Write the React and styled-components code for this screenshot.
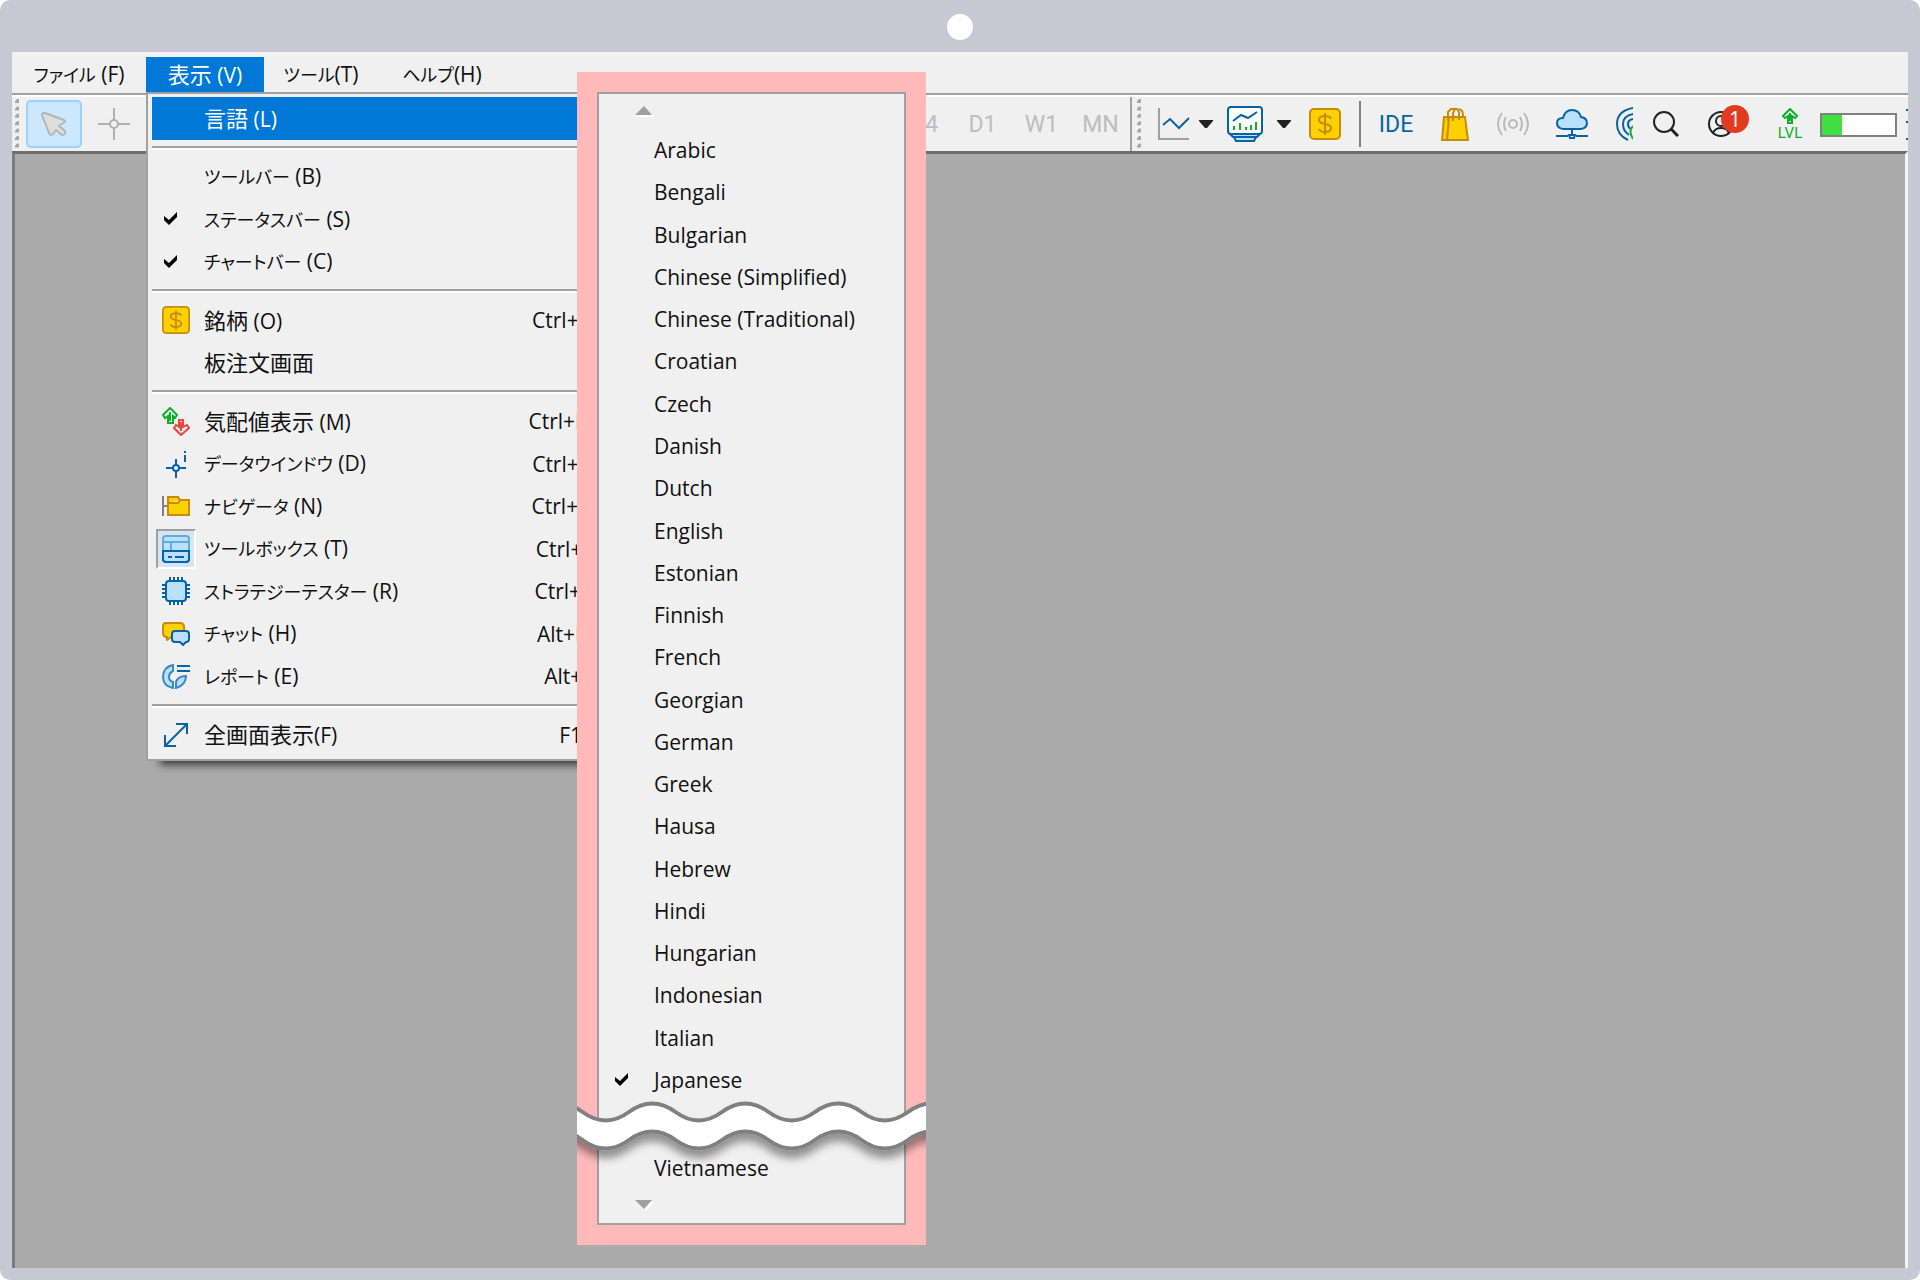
import React, { useState } from "react";
import styled, { createGlobalStyle } from "styled-components";

const GlobalStyle = createGlobalStyle`
  * {
    box-sizing: border-box;
  }

  body {
    margin: 0;
    background: #ffffff;
    color: #111111;
    font-family: "Open Sans", "Noto Sans CJK JP", sans-serif;
    font-size: 21px;
  }

  button {
    margin: 0;
    padding: 0;
    border: 0;
    background: none;
    color: inherit;
    font: inherit;
    cursor: pointer;
  }

  svg {
    display: block;
    flex: none;
  }
`;

const Frame = styled.div`
  display: flex;
  flex-direction: column;
  min-height: 100vh;
  padding: 0 12px 12px;
  border-radius: 10px;
  background: #c8c8d5;
`;

const FrameTop = styled.div`
  display: flex;
  align-items: center;
  justify-content: center;
  height: 52px;
  padding-top: 2px;
`;

const Camera = styled.span`
  width: 26px;
  height: 26px;
  border-radius: 50%;
  background: #ffffff;
`;

const AppWindow = styled.div`
  position: relative;
  flex: 1;
  display: flex;
  flex-direction: column;
  overflow: hidden;
  background: #f0f0f0;
`;

const MenuBar = styled.nav`
  display: flex;
  height: 43px;
  border-top: 5px solid #f3f3f3;
  border-bottom: 2px solid #a0a0a0;
`;

const MenuBarItem = styled.button`
  width: ${(props) => props.$width};
  height: 35px;
  background: ${(props) => (props.$active ? "#0078d7" : "transparent")};
  color: ${(props) => (props.$active ? "#ffffff" : "#111111")};
  line-height: 35px;
  white-space: nowrap;
`;

const Kana = styled.span`
  font-size: 18px;
  font-feature-settings: "palt";
`;

const Kanji = styled.span`
  font-size: 22px;
`;

const ToolBar = styled.div`
  display: flex;
  height: 56px;
  border-top: 2px solid #ffffff;
`;

const ToolGroup = styled.div`
  display: flex;
  align-items: center;
  flex: ${(props) => (props.$grow ? "1" : "none")};
  padding-left: ${(props) => (props.$grow ? "0" : "2px")};
  border-right: ${(props) => (props.$grow ? "2px solid #a0a0a0" : "0")};
`;

const Spacer = styled.span`
  flex: 1;
`;

const GripDots = styled.svg`
  margin-right: 6px;
`;

const ToolButton = styled.button`
  display: flex;
  align-items: center;
  justify-content: center;
  flex: none;
  width: ${(props) => props.$width};
  height: 48px;
  border: 2px solid ${(props) => (props.$pressed ? "#99d1ff" : "transparent")};
  border-radius: 5px;
  background: ${(props) => (props.$pressed ? "#cce8ff" : "transparent")};
  color: ${(props) => props.$color || "#bdbdbd"};
  font-family: Roboto, sans-serif;
  font-size: 23px;
`;

const Divider = styled.span`
  width: 2px;
  height: 46px;
  background: #808080;
`;

const AccountButton = styled(ToolButton)`
  position: relative;
`;

const Badge = styled.span`
  position: absolute;
  top: 3px;
  right: 9px;
  width: 28px;
  height: 28px;
  border-radius: 50%;
  background: #e23b22;
  color: #ffffff;
  font-family: "Open Sans", sans-serif;
  font-size: 21px;
  line-height: 28px;
  text-align: center;
`;

const Level = styled.div`
  display: flex;
  flex-direction: column;
  align-items: center;
  gap: 1px;
  width: 60px;
  color: #0fae2b;
  font-family: Roboto, sans-serif;
  font-size: 15px;
  line-height: 14px;
`;

const LevelMeter = styled.div`
  width: 77px;
  height: 24px;
  margin: 2px 9px 0 0;
  border: 2px solid #808080;
  background: #ffffff;
`;

const LevelFill = styled.div`
  height: 100%;
  background: #40e040;
`;

const Workspace = styled.main`
  flex: 1;
  border-top: 3px solid #6e6e6e;
  border-left: 3px solid #7c7c7c;
  border-right: 3px solid #f4f4f4;
  background: #ababab;
`;

const ViewMenu = styled.div`
  position: absolute;
  top: 40px;
  left: 134px;
  display: flex;
  flex-direction: column;
  width: 471px;
  height: 669px;
  padding: 3px 4px;
  border: 2px solid #a0a0a0;
  background: #f0f0f0;
  box-shadow: 10px 8px 8px -4px rgba(0, 0, 0, 0.65);
`;

const MenuRow = styled.button`
  display: flex;
  align-items: center;
  flex: 1;
  padding: 0 17px 0 4px;
  background: ${(props) => (props.$active ? "#0078d7" : "transparent")};
  color: ${(props) => (props.$active ? "#ffffff" : "#111111")};
  line-height: 30px;
  text-align: left;
  white-space: nowrap;
`;

const IconSlot = styled.span`
  display: flex;
  align-items: center;
  justify-content: ${(props) => (props.$check ? "flex-start" : "center")};
  width: 40px;
  height: 40px;
  margin-right: 8px;
  padding-left: ${(props) => (props.$check ? "6px" : "0")};
  border: 2px solid;
  border-color: ${(props) =>
    props.$pressed ? "#a0a0a0 #ffffff #ffffff #a0a0a0" : "transparent"};
  background: ${(props) => (props.$pressed ? "#d6e5f2" : "transparent")};
`;

const RowLabel = styled.span`
  flex: 1;
`;

const MenuLine = styled.hr`
  flex: none;
  width: 100%;
  height: 4px;
  margin: 6px 0;
  border: 0;
  border-top: 2px solid #a0a0a0;
  border-bottom: 2px solid #ffffff;
`;

const LanguageFrame = styled.div`
  position: absolute;
  top: 20px;
  left: 565px;
  width: 349px;
  padding: 20px;
  background: #ffb9b9;
`;

const LanguageMenu = styled.div`
  display: flex;
  flex-direction: column;
  height: 1133px;
  border: 2px solid #a0a0a0;
  background: #f0f0f0;
`;

const ScrollButton = styled.button`
  flex: none;
  height: 35px;
  padding-left: 36px;
`;

const LanguageList = styled.div`
  display: flex;
  flex: none;
  flex-direction: column;
  height: 972px;
`;

const LanguageRow = styled.button`
  display: flex;
  align-items: center;
  flex: 1;
  line-height: 30px;
  text-align: left;
`;

const CheckSlot = styled.span`
  width: 55px;
  padding-left: 16px;
`;

const TornGap = styled.div`
  flex: none;
  height: 46px;
`;

const Tear = styled.svg`
  position: absolute;
  left: 0;
  bottom: 74px;
`;

const BLUE = "#0763a8";
const SKY = "#b9e1ff";
const GOLD = "#fdd000";
const AMBER = "#c98a0a";
const GREEN = "#0fae2b";

const CheckIcon = () => (
  <svg width="14" height="14" viewBox="0 0 14 14">
    <path d="M0 4 L5 8 L13 0 V5 L5 13 L0 8 Z" fill="#000000" />
  </svg>
);

const Grip = () => (
  <GripDots width="8" height="50" viewBox="0 0 8 50">
    {[0, 1, 2, 3, 4, 5, 6].map((n) => (
      <g key={n}>
        <rect x="3" y={n * 7.4} width="4" height="4" fill="#fafafa" />
        <path d={`M7 ${n * 7.4} v4 h-4 v-2 l2 -2 z`} fill="#a6a6a6" />
      </g>
    ))}
  </GripDots>
);

const CaretIcon = () => (
  <svg width="14" height="8" viewBox="0 0 14 8">
    <path d="M0 0 H14 V1 L8 8 H6 L0 1 Z" fill="#222222" />
  </svg>
);

const PointerIcon = () => (
  <svg width="26" height="26" viewBox="0 0 26 26" fill="#dedede" stroke="#b4b4b4" strokeWidth="2" strokeLinejoin="round">
    <path d="M1 4 Q1 1 4 2 L23 9 Q26 11 22 12 L18 15 L24 20 Q25 24 21 24 L15 19 L12 23 Q9 25 8 22 Z" />
  </svg>
);

const CrossIcon = () => (
  <svg width="32" height="32" viewBox="0 0 32 32" fill="none" stroke="#b0b0b0" strokeWidth="2">
    <path d="M16 0 V12 M16 20 V32 M0 16 H12 M20 16 H32" />
    <circle cx="16" cy="16" r="4" />
  </svg>
);

const LineChartIcon = () => (
  <svg width="32" height="32" viewBox="0 0 32 32" fill="none" strokeWidth="2">
    <path d="M1 0 V31 H31" stroke="#a0a0a0" />
    <path d="M5 17 L12 11 L21 20 L31 10" stroke={BLUE} />
  </svg>
);

const IndicatorIcon = () => (
  <svg width="36" height="36" viewBox="0 0 36 36" fill="none" stroke={BLUE} strokeWidth="2">
    <path d="M2 27 L6 31 H30 L34 27 M7 31 L9 35 H27 L29 31" fill={SKY} />
    <rect x="1" y="1" width="34" height="27" rx="3" fill="#ffffff" />
    <path d="M6 15 L14 9 L21 12 L30 6" />
    <path d="M7 24 V20 M13 24 V17 M19 24 V21 M24 24 V19 M29 24 V16" stroke={GREEN} />
  </svg>
);

const DollarIcon = ({ size = 32 }) => (
  <svg width={size} height={size} viewBox="0 0 32 32" fill="none" stroke={AMBER} strokeWidth="2">
    <rect x="1" y="1" width="30" height="30" rx="4" fill={GOLD} />
    <path d="M22 11 Q21 8 16 8 Q10 8 10 12 Q10 15 16 16 Q22 17 22 20 Q22 24 16 24 Q11 24 10 21 M16 5 V27" />
  </svg>
);

const BagIcon = () => (
  <svg width="28" height="34" viewBox="0 0 28 34" fill="none" stroke={AMBER} strokeWidth="2">
    <path d="M3 10 H24 L27 33 H1 Z" fill={GOLD} />
    <path d="M7 14 V5 L10 2 H16 L18 5 V13 M12 14 V6 L14 2 M18 2 Q22 3 22 8 V10 M8 10 L6 33" />
  </svg>
);

const SignalIcon = () => (
  <svg width="32" height="24" viewBox="0 0 32 24" fill="none" stroke="#b9b9b9" strokeWidth="2">
    <circle cx="16" cy="12" r="4" />
    <path d="M9 5 Q5 12 9 19 M23 5 Q27 12 23 19 M5 1 Q-3 12 5 23 M27 1 Q35 12 27 23" />
  </svg>
);

const CloudIcon = () => (
  <svg width="32" height="30" viewBox="0 0 32 30" fill="none" stroke={BLUE} strokeWidth="2">
    <path d="M7 20 Q1 19 1 14 Q1 9 7 9 Q9 1 16 1 Q23 1 25 8 Q31 9 31 14 Q31 19 25 20 Z" fill={SKY} />
    <path d="M16 20 V26 M0 27 H12 M20 27 H32 M13 26 H19 L18 29 H14 Z" />
  </svg>
);

const VpsIcon = () => (
  <svg width="17" height="34" viewBox="0 0 17 34" fill="none" stroke={BLUE} strokeWidth="2">
    <path d="M17 1 Q1 4 1 17 Q1 28 12 33 M17 7 Q7 9 7 17 Q7 24 13 28 M17 12 Q12 13 12 17 Q12 21 15 22" />
    <path d="M17 19 Q12 24 17 32" stroke={GREEN} />
  </svg>
);

const SearchIcon = () => (
  <svg width="26" height="26" viewBox="0 0 26 26" fill="none" stroke="#222222" strokeWidth="2">
    <circle cx="11" cy="11" r="10" />
    <path d="M18 18 L25 25" strokeWidth="3" />
  </svg>
);

const UserIcon = () => (
  <svg width="26" height="26" viewBox="0 0 26 26" fill="none" stroke="#222222" strokeWidth="2">
    <circle cx="13" cy="13" r="12" />
    <circle cx="13" cy="10" r="5" />
    <path d="M5 22 Q7 17 13 17 Q19 17 21 22" />
  </svg>
);

const UpArrowIcon = () => (
  <svg width="16" height="17" viewBox="0 0 16 17" fill="none" stroke={GREEN} strokeWidth="2">
    <path d="M8 1 L15 8 L13 10 L10 8 V15 H6 V8 L3 10 L1 8 Z M8 5 V13" />
  </svg>
);

const MoreIcon = () => (
  <svg width="2" height="32" viewBox="0 0 2 32" stroke={BLUE} strokeWidth="2">
    <path d="M0 2 H2 M0 14 H2 M0 31 H2" />
  </svg>
);

const QuotesIcon = () => (
  <svg width="28" height="29" viewBox="0 0 28 29" fill="none" strokeWidth="2">
    <path d="M8 1 L15 8 L13 11 L11 9 V16 H6 V9 L3 11 L1 8 Z M8 5 V14" stroke={GREEN} />
    <path d="M19 28 L12 21 L14 18 L17 20 V13 H21 V20 L25 18 L27 21 Z M19 15 V24" stroke="#e5483c" />
  </svg>
);

const DataWindowIcon = () => (
  <svg width="28" height="28" viewBox="0 0 28 28" fill="none" stroke={BLUE} strokeWidth="2">
    <path d="M14 9 V15 M14 21 V28 M4 18 H11 M17 18 H24" />
    <circle cx="14" cy="18" r="3" />
    <path d="M23 1 V3 M23 5 V12" />
  </svg>
);

const NavigatorIcon = () => (
  <svg width="28" height="22" viewBox="0 0 28 22" fill="none" strokeWidth="2">
    <path d="M1 1 V21 M1 11 H6" stroke="#808080" />
    <path d="M6 2 H16 L18 5 H27 V20 H6 Z M6 8 H16 L18 5" fill={GOLD} stroke={AMBER} />
  </svg>
);

const ToolboxIcon = () => (
  <svg width="28" height="28" viewBox="0 0 28 28" fill="none" strokeWidth="2">
    <rect x="1" y="1" width="26" height="26" rx="3" fill={SKY} stroke="#5fade0" />
    <path d="M1 7 H27 M9 7 V16" stroke="#5fade0" />
    <path d="M1 16 H27 V24 Q27 27 24 27 H4 Q1 27 1 24 Z M6 22 H10 M13 22 H22" stroke={BLUE} />
  </svg>
);

const TesterIcon = () => (
  <svg width="28" height="28" viewBox="0 0 28 28" fill="none" stroke={BLUE} strokeWidth="2">
    <path d="M8 0 V28 M12 0 V28 M16 0 V28 M20 0 V28 M0 8 H28 M0 12 H28 M0 16 H28 M0 20 H28" />
    <rect x="4" y="4" width="20" height="20" rx="3" fill={SKY} />
  </svg>
);

const ChatIcon = () => (
  <svg width="28" height="24" viewBox="0 0 28 24" fill="none" strokeWidth="2" strokeLinejoin="round">
    <path d="M4 1 H18 Q22 1 22 5 V12 Q22 15 18 15 H9 L5 18 V15 Q1 15 1 11 V4 Q1 1 4 1 Z" fill={GOLD} stroke={AMBER} />
    <path d="M13 9 H24 Q27 9 27 12 V17 Q27 20 24 20 L21 23 L18 20 H13 Q10 20 10 17 V12 Q10 9 13 9 Z" fill={SKY} stroke={BLUE} />
  </svg>
);

const ReportIcon = () => (
  <svg width="28" height="25" viewBox="0 0 28 25" strokeWidth="2">
    <path d="M11 1 Q1 3 1 13 Q1 22 11 24 V18 Q7 17 7 13 Q7 9 11 7 Z M14 24 V18 Q16 12 24 12 Q24 21 14 24 Z" fill={SKY} stroke="#3a86be" />
    <path d="M15 2 H28 M15 7 H28" stroke={BLUE} />
  </svg>
);

const FullScreenIcon = () => (
  <svg width="26" height="26" viewBox="0 0 26 26" fill="none" stroke={BLUE} strokeWidth="2">
    <path d="M2 24 L24 2 M13 2 H24 V12 M2 13 V24 H13" />
  </svg>
);

const ScrollArrow = ({ down }) => (
  <svg width="19" height="11" viewBox="0 0 19 11">
    <path d={down ? "M3 2 H19 L11 11 Z" : "M0 9 H18 V11 H2 Z"} fill="#ffffff" />
    <path d={down ? "M0 0 H17 L9 9 Z" : "M0 9 L9 0 L17 9 Z"} fill="#a0a0a0" />
  </svg>
);

const waveRight = "q23.25 -17 46.5 0" + " t46.5 0".repeat(9);
const waveLeft = "q-23.25 17 -46.5 0" + " t-46.5 0".repeat(9);

const TearBand = () => (
  <Tear width="349" height="72" viewBox="0 0 349 72">
    <defs>
      <filter id="tear" x="-10%" y="-20%" width="120%" height="180%">
        <feDropShadow dx="0" dy="8" stdDeviation="4" floodOpacity="0.4" />
      </filter>
    </defs>
    <path
      d={`M-41 13 ${waveRight} v28 ${waveLeft} Z`}
      fill="#ffffff"
      stroke="#808080"
      strokeWidth="4"
      filter="url(#tear)"
    />
  </Tear>
);

// kana runs are set smaller than the kanji and latin around them
const Label = ({ text }) =>
  text.split(/([\u30a0-\u30ff]+|[\u4e00-\u9fff]+)/).map((part, index) => {
    if (/^[\u30a0-\u30ff]/.test(part)) return <Kana key={index}>{part}</Kana>;
    if (/^[\u4e00-\u9fff]/.test(part)) return <Kanji key={index}>{part}</Kanji>;
    return part;
  });

const menus = [
  { label: "ファイル (F)", width: "134px" },
  { label: "表示 (V)", width: "118px" },
  { label: "ツール(T)", width: "114px" },
  { label: "ヘルプ(H)", width: "128px" },
];

const viewItems = [
  { label: "言語 (L)", active: true },
  null,
  { label: "ツールバー (B)" },
  { label: "ステータスバー (S)", checked: true },
  { label: "チャートバー (C)", checked: true },
  null,
  { label: "銘柄 (O)", icon: <DollarIcon size={28} />, keys: "Ctrl+U" },
  { label: "板注文画面" },
  null,
  { label: "気配値表示 (M)", icon: <QuotesIcon />, keys: "Ctrl+M" },
  { label: "データウインドウ (D)", icon: <DataWindowIcon />, keys: "Ctrl+D" },
  { label: "ナビゲータ (N)", icon: <NavigatorIcon />, keys: "Ctrl+N" },
  { label: "ツールボックス (T)", icon: <ToolboxIcon />, keys: "Ctrl+T", pressed: true },
  { label: "ストラテジーテスター (R)", icon: <TesterIcon />, keys: "Ctrl+R" },
  { label: "チャット (H)", icon: <ChatIcon />, keys: "Alt+M" },
  { label: "レポート (E)", icon: <ReportIcon />, keys: "Alt+E" },
  null,
  { label: "全画面表示(F)", icon: <FullScreenIcon />, keys: "F11" },
];

const timeframes = ["H4", "D1", "W1", "MN"];

const languages = [
  "Arabic",
  "Bengali",
  "Bulgarian",
  "Chinese (Simplified)",
  "Chinese (Traditional)",
  "Croatian",
  "Czech",
  "Danish",
  "Dutch",
  "English",
  "Estonian",
  "Finnish",
  "French",
  "Georgian",
  "German",
  "Greek",
  "Hausa",
  "Hebrew",
  "Hindi",
  "Hungarian",
  "Indonesian",
  "Italian",
  "Japanese",
];

const App = () => {
  const [language, setLanguage] = useState("Japanese");
  const level = 28;

  const renderLanguage = (name) => (
    <LanguageRow
      key={name}
      role="menuitemradio"
      aria-checked={language === name}
      onClick={() => setLanguage(name)}
    >
      <CheckSlot>{language === name && <CheckIcon />}</CheckSlot>
      {name}
    </LanguageRow>
  );

  return (
    <>
      <GlobalStyle />
      <Frame>
        <FrameTop>
          <Camera />
        </FrameTop>
        <AppWindow>
          <MenuBar>
            {menus.map((menu, index) => (
              <MenuBarItem key={menu.label} $width={menu.width} $active={index === 1}>
                <Label text={menu.label} />
              </MenuBarItem>
            ))}
          </MenuBar>
          <ToolBar>
            <ToolGroup $grow>
              <Grip />
              <ToolButton $width="56px" $pressed aria-label="Cursor">
                <PointerIcon />
              </ToolButton>
              <ToolButton $width="64px" aria-label="Crosshair">
                <CrossIcon />
              </ToolButton>
              <Spacer />
              {timeframes.map((name) => (
                <ToolButton key={name} $width="59px">
                  {name}
                </ToolButton>
              ))}
            </ToolGroup>
            <ToolGroup>
              <Grip />
              <ToolButton $width="51px" aria-label="Line chart">
                <LineChartIcon />
              </ToolButton>
              <ToolButton $width="14px" aria-label="Chart types">
                <CaretIcon />
              </ToolButton>
              <ToolButton $width="64px" aria-label="Indicators">
                <IndicatorIcon />
              </ToolButton>
              <ToolButton $width="14px" aria-label="Indicator list">
                <CaretIcon />
              </ToolButton>
              <ToolButton $width="68px" aria-label="Symbols">
                <DollarIcon />
              </ToolButton>
              <Divider />
              <ToolButton $width="70px" $color={BLUE}>
                IDE
              </ToolButton>
              <ToolButton $width="48px" aria-label="Market">
                <BagIcon />
              </ToolButton>
              <ToolButton $width="68px" aria-label="Signals">
                <SignalIcon />
              </ToolButton>
              <ToolButton $width="50px" aria-label="Cloud">
                <CloudIcon />
              </ToolButton>
              <ToolButton $width="54px" aria-label="VPS">
                <VpsIcon />
              </ToolButton>
              <ToolButton $width="30px" aria-label="Search">
                <SearchIcon />
              </ToolButton>
              <AccountButton $width="79px" aria-label="Account">
                <UserIcon />
                <Badge>1</Badge>
              </AccountButton>
              <Level>
                <UpArrowIcon />
                LVL
              </Level>
              <LevelMeter>
                <LevelFill style={{ width: `${level}%` }} />
              </LevelMeter>
              <MoreIcon />
            </ToolGroup>
          </ToolBar>
          <Workspace />
          <ViewMenu role="menu">
            {viewItems.map((item, index) =>
              item ? (
                <MenuRow key={item.label} role="menuitem" $active={item.active}>
                  <IconSlot $pressed={item.pressed} $check={item.checked}>
                    {item.checked ? <CheckIcon /> : item.icon}
                  </IconSlot>
                  <RowLabel>
                    <Label text={item.label} />
                  </RowLabel>
                  <span>{item.keys}</span>
                </MenuRow>
              ) : (
                <MenuLine key={index} />
              )
            )}
          </ViewMenu>
          <LanguageFrame>
            <LanguageMenu role="menu">
              <ScrollButton aria-label="Scroll up">
                <ScrollArrow />
              </ScrollButton>
              <LanguageList>{languages.map(renderLanguage)}</LanguageList>
              <TornGap />
              {renderLanguage("Vietnamese")}
              <ScrollButton aria-label="Scroll down">
                <ScrollArrow down />
              </ScrollButton>
            </LanguageMenu>
            <TearBand />
          </LanguageFrame>
        </AppWindow>
      </Frame>
    </>
  );
};

export default App;
